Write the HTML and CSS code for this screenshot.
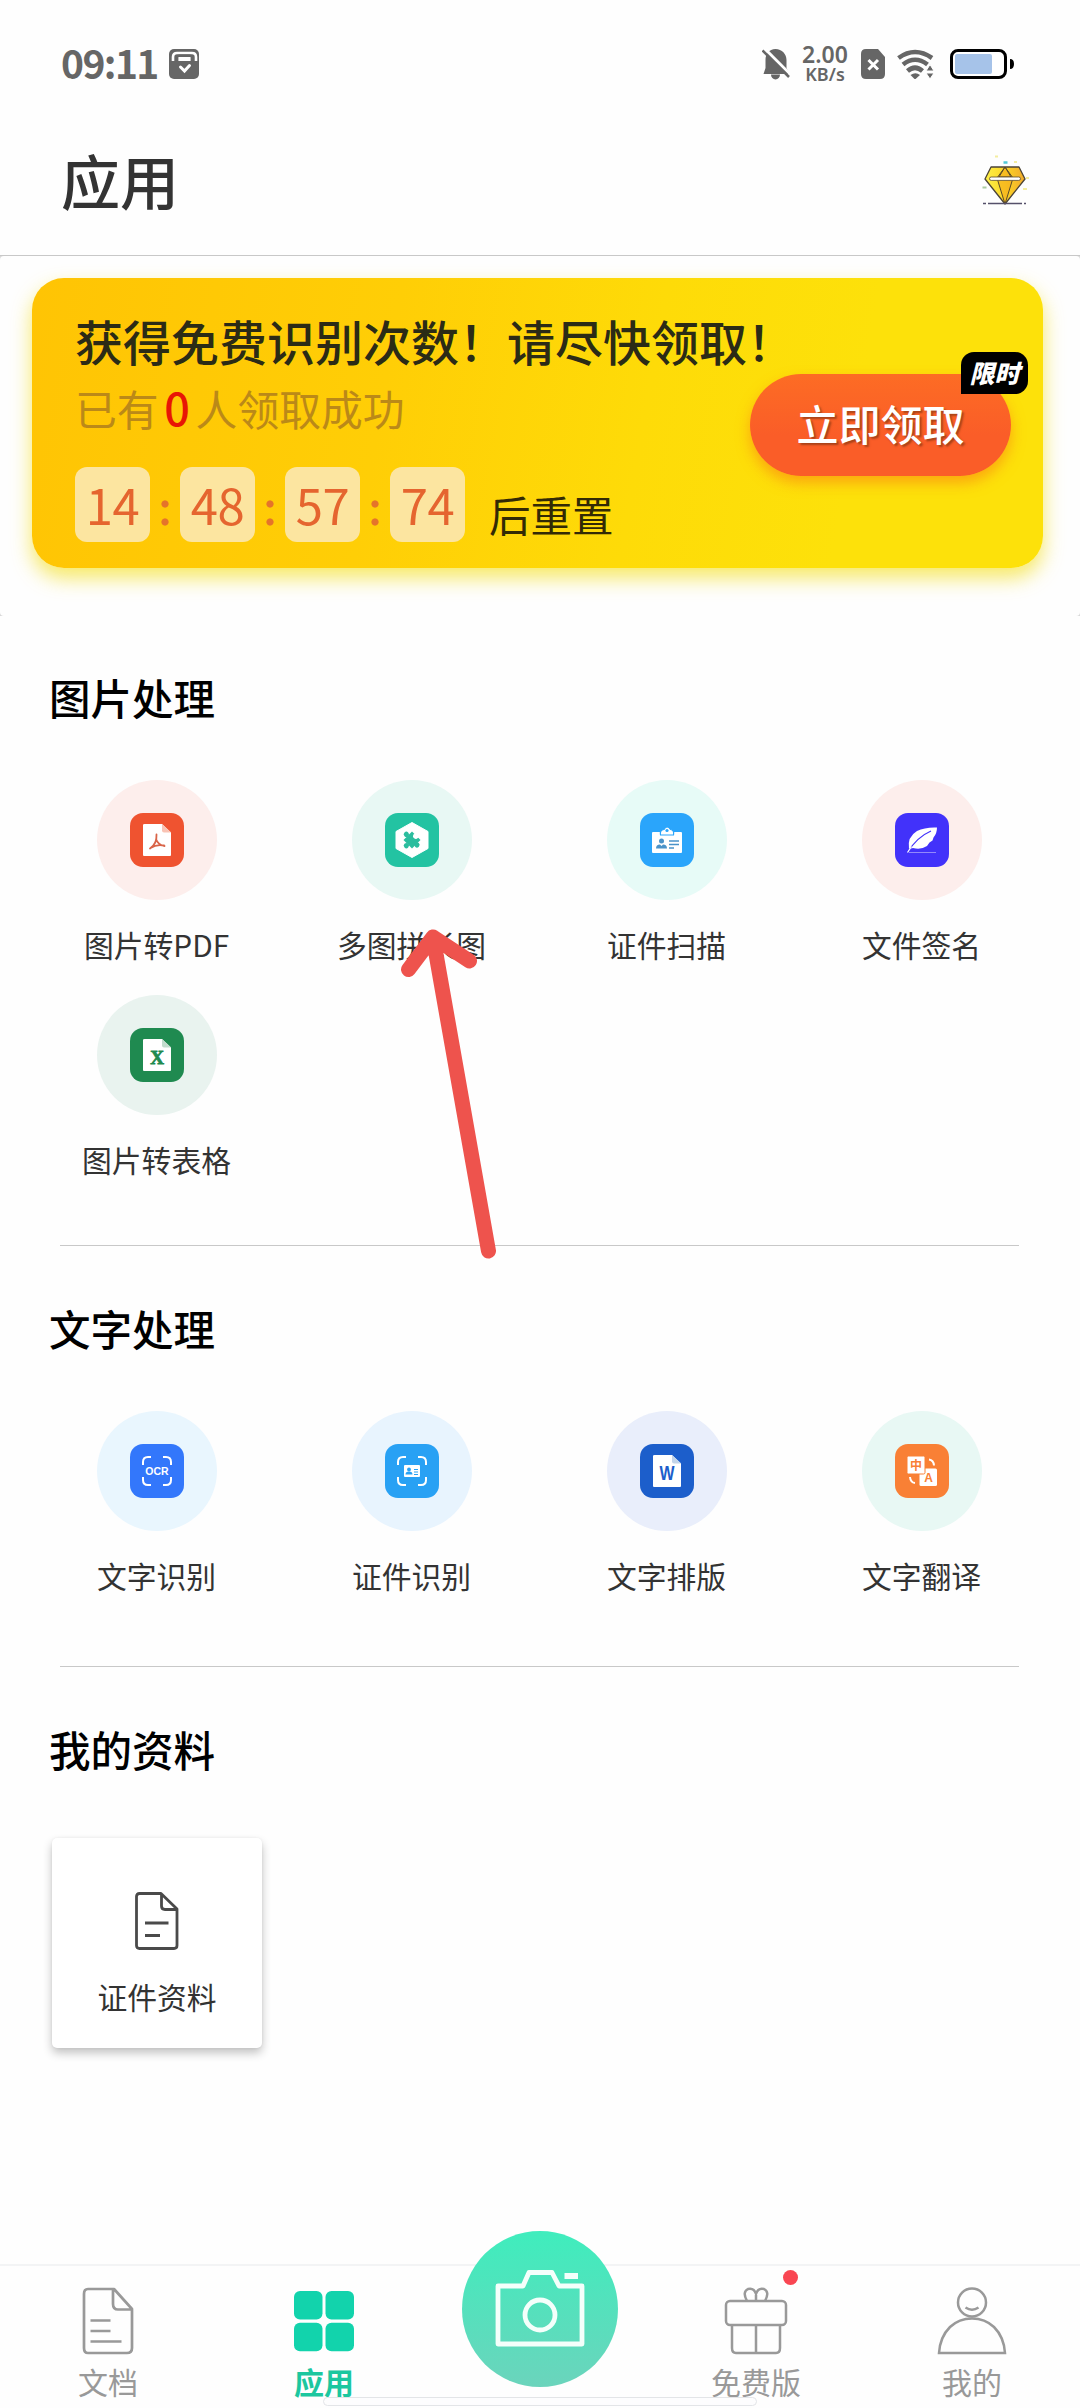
FILE: index.html
```html
<!DOCTYPE html>
<html lang="zh-CN">
<head>
<meta charset="utf-8">
<title>应用</title>
<link rel="stylesheet" href="styles.css">
</head>
<body>
<div class="screen">
  <div class="statusbar">
    <span class="clock">09:11</span>
    <svg class="st-store" width="30" height="30" viewBox="0 0 30 30"><rect width="30" height="30" rx="5" fill="#666"/><path d="M4 12V8q0-4 4-4h15q4 0 4 4v4" fill="none" stroke="#fff" stroke-width="2.6"/><path d="M8 12V9q0-1 1-1h13q1 0 1 1v3z" fill="#fff"/><path d="M8.500 12V8.500q0-2 2-2h10q2 0 2 2V12" fill="none" stroke="#666" stroke-width="1.800"/><path d="M11.500 18l4 4 5-5.500" fill="none" stroke="#fff" stroke-width="3" stroke-linecap="round"/></svg>
    <span class="grow"></span>
    <svg class="st-bell" width="28" height="31" viewBox="0 0 28 31"><path d="M13.500 0C20 0 24.500 5 24.500 11v8l3 6H1.500l2-6v-8C3.500 5 7 0 13.500 0zM9 25.500h9a4.500 5 0 0 1-9 0z" fill="#666"/><path d="M2-1L30 27" stroke="#fff" stroke-width="3"/><path d="M.5 1.500L27 28" stroke="#666" stroke-width="2.500"/></svg>
    <div class="speed">2.00<br>KB/s</div>
    <svg class="st-sim" width="24" height="30" viewBox="0 0 24 30"><path d="M5 0h12l7 8v17q0 5-5 5H5q-5 0-5-5V5q0-5 5-5z" fill="#666"/><path d="M7.500 11l9.500 9.500M17 11l-9.500 9.500" stroke="#fff" stroke-width="3"/></svg>
    <svg class="st-wifi" width="37" height="30" viewBox="0 0 37 30"><g fill="none" stroke="#666" stroke-width="4.600"><path d="M1.500 9Q18 -3 35 9"/><path d="M6 15.500q12-9.500 24.500 0"/><path d="M10.500 22q7.500-6.500 15 0"/></g><path d="M13.500 26q5-3.500 9.500 0L18 30.500z" fill="#666"/><path d="M29 22l4-6.500 4 6.500zM29 24h8l-4 6z" fill="#666" stroke="#fff" stroke-width="1"/></svg>
    <svg class="st-batt" width="65" height="30" viewBox="0 0 65 30"><rect x="1.500" y="1.500" width="54" height="27" rx="6.500" fill="#fff" stroke="#000" stroke-width="3"/><rect x="5" y="5" width="37" height="20" rx="2" fill="#a6c3e9"/><path d="M60 10q4 0 4 5t-4 5z"/></svg>
  </div>
  <header class="header">
    <h1 class="page-title">应用</h1>
    <svg class="gem" width="48" height="56" viewBox="0 0 48 56">
      <defs><linearGradient id="gem" x1="0" x2="1"><stop offset="0" stop-color="#fdf04a"/><stop offset=".5" stop-color="#fcd626"/><stop offset="1" stop-color="#f0a92c"/></linearGradient></defs>
      <path d="M10 15h28l6 12-20 25L4 27z" fill="url(#gem)" stroke="#4b4337" stroke-width="1.300" stroke-linejoin="round"/>
      <path d="M24 15l-8 11 8 26 8-26zM24 15l-6 10h12z" fill="#f5ab1c" fill-opacity=".6" stroke="#5a4a28" stroke-width="1"/>
      <rect x="8.500" y="25" width="31" height="3.400" rx="1.700" fill="#fff" stroke="#5a4a28" stroke-width=".8"/>
      <path d="M2 51.500h3M7 51.500h34M43 51.500h2" stroke="#55506a" stroke-width="1.600"/>
      <path d="M22.500 10.500h4" stroke="#52c9d8" stroke-width="2.500"/><path d="M14 4.500h3M33 10h3M45 26h3M42 37h4" stroke="#f4eda0" stroke-width="2"/><path d="M1.500 35.500h4" stroke="#a9cba0" stroke-width="2"/>
    </svg>
  </header>

  <div class="promo-wrap">
    <div class="promo-area">
      <section class="promo">
        <div class="promo-title">获得免费识别次数！请尽快领取！</div>
        <div class="promo-sub">已有<span class="promo-count">0</span>人领取成功</div>
        <div class="countdown">
          <span class="tick">14</span><span class="colon"></span><span class="tick">48</span><span class="colon"></span><span class="tick">57</span><span class="colon"></span><span class="tick">74</span>
          <span class="reset">后重置</span>
        </div>
        <div class="claim">立即领取<span class="claim-badge">限时</span></div>
      </section>
    </div>
  </div>

  <section class="group group-image">
    <h2 class="group-title">图片处理</h2>
    <div class="tools">
      <div class="tool">
        <div class="disc disc-rose"><svg class="tile" viewBox="0 0 54 54"><rect width="54" height="54" rx="13" fill="#ef5330"/><path d="M14.500 11H32l9 8.500V42q0 1-1 1H14q-1 0-1-1V12q0-1 1.500-1z" fill="#fff"/><path d="M32 11l9 8.500h-7q-2 0-2-2z" fill="#f9c3b4"/><path d="M20 35.500q7-4.500 6.500-14M26 26q2 6 8.500 7M20.500 35q6-4 13.500-2.500" fill="none" stroke="#d96448" stroke-width="1.800" stroke-linecap="round"/></svg></div>
        <span class="tool-label">图片转PDF</span>
      </div>
      <div class="tool">
        <div class="disc disc-mint"><svg class="tile" viewBox="0 0 54 54"><rect width="54" height="54" rx="13" fill="#23c3a2"/><path d="M27 9.500l16 9v17l-16 9-16-9v-17z" fill="#fff" stroke="#fff" stroke-linejoin="round"/><g transform="rotate(-45 27 27)" fill="#2bbd9e"><rect x="21" y="21" width="12" height="12"/><circle cx="27" cy="19" r="2.600"/><circle cx="19" cy="27" r="2.600"/><circle cx="27" cy="34" r="2.600"/><circle cx="32.500" cy="27" r="2.800" fill="#fff"/></g></svg></div>
        <span class="tool-label">多图拼长图</span>
      </div>
      <div class="tool">
        <div class="disc disc-aqua"><svg class="tile" viewBox="0 0 54 54"><rect width="54" height="54" rx="13" fill="#2aa5fb"/><path d="M13 19h28q1 0 1 1v19q0 1-1 1H13q-1 0-1-1V20q0-1 1-1z" fill="#fff"/><path d="M20.500 22q-1-5 3.500-5.500 3-5 6.500 0 4 .5 3 5.500z" fill="#fff" stroke="#2aa5fb" stroke-width="1.200"/><circle cx="27" cy="17.500" r="1.600" fill="#2aa5fb"/><circle cx="21.500" cy="28" r="2.500" fill="#4a93c9"/><path d="M16 35.500q0-4 4-4l1.500 1.500 1.500-1.500q4 0 4 4z" fill="#4a93c9"/><path d="M29 28h10M29 31.500h10M29 35h5" stroke="#4a93c9" stroke-width="1.500"/></svg></div>
        <span class="tool-label">证件扫描</span>
      </div>
      <div class="tool">
        <div class="disc disc-rose"><svg class="tile" viewBox="0 0 54 54"><rect width="54" height="54" rx="13" fill="#4232fa"/><path d="M14 36Q12 24 22 18q8-4 20-3.500 0 6-3.500 10l-1 3-3 2-2.500 3.500Q26 37 18 35z" fill="#fff"/><path d="M12.500 39.500Q22 24 36 18" fill="none" stroke="#4232fa" stroke-width="1.200"/><path d="M12.500 39.500l4-6" stroke="#fff" stroke-width="1.300"/><path d="M14 39.500h27" stroke="#a79ffb" stroke-width=".8"/></svg></div>
        <span class="tool-label">文件签名</span>
      </div>
      <div class="tool">
        <div class="disc disc-sage"><svg class="tile" viewBox="0 0 54 54"><rect width="54" height="54" rx="13" fill="#1f8a50"/><path d="M14.500 11H32l9 8.500V42q0 1-1 1H14q-1 0-1-1V12q0-1 1.500-1z" fill="#fff"/><path d="M32 11l9 8.500h-7q-2 0-2-2z" fill="#c2dccd"/><text x="27" y="36" class="glyph glyph-x">X</text></svg></div>
        <span class="tool-label">图片转表格</span>
      </div>
    </div>
  </section>

  <div class="divider"></div>

  <section class="group group-text">
    <h2 class="group-title">文字处理</h2>
    <div class="tools">
      <div class="tool">
        <div class="disc disc-sky"><svg class="tile" viewBox="0 0 54 54"><rect width="54" height="54" rx="13" fill="#3377fb"/><path d="M13 21v-3q0-5 5-5h3M33 13h3q5 0 5 5v3M41 33v3q0 5-5 5h-3M21 41h-3q-5 0-5-5v-3" fill="none" stroke="#fff" stroke-width="2"/><text x="27" y="31" class="glyph glyph-ocr">OCR</text></svg></div>
        <span class="tool-label">文字识别</span>
      </div>
      <div class="tool">
        <div class="disc disc-blue"><svg class="tile" viewBox="0 0 54 54"><rect width="54" height="54" rx="13" fill="#28a1f4"/><path d="M13 21v-3q0-5 5-5h3M33 13h3q5 0 5 5v3M41 33v3q0 5-5 5h-3M21 41h-3q-5 0-5-5v-3" fill="none" stroke="#fff" stroke-width="2"/><rect x="19" y="21" width="16" height="12" rx="1" fill="#fff"/><circle cx="24" cy="25.500" r="1.900" fill="#28a1f4"/><path d="M20.500 30.500q0-3 3.500-3t3.500 3zM29 25h4v1h-4zM29 27.500h4v1h-4zM29 30h4v1h-4z" fill="#28a1f4"/></svg></div>
        <span class="tool-label">证件识别</span>
      </div>
      <div class="tool">
        <div class="disc disc-lilac"><svg class="tile" viewBox="0 0 54 54"><rect width="54" height="54" rx="13" fill="#1c5ecb"/><path d="M14.500 11H32l9 8.500V42q0 1-1 1H14q-1 0-1-1V12q0-1 1.500-1z" fill="#fff"/><path d="M32 11l9 8.500h-7q-2 0-2-2z" fill="#c3d5ea"/><text x="27" y="36" class="glyph glyph-w" textLength="15" lengthAdjust="spacingAndGlyphs">W</text></svg></div>
        <span class="tool-label">文字排版</span>
      </div>
      <div class="tool">
        <div class="disc disc-mint"><svg class="tile" viewBox="0 0 54 54"><rect width="54" height="54" rx="13" fill="#f98035"/><rect x="24.500" y="24.500" width="17.500" height="17.500" rx="1.500" fill="#fff"/><rect x="12" y="12" width="18" height="18" rx="1.500" fill="#fff" stroke="#f98035" stroke-width="1"/><path d="M34 15.500q4.500.5 5 6M20 39q-4.500-.5-5-6" fill="none" stroke="#fff" stroke-width="2"/><text x="21" y="25.500" class="glyph glyph-zh">中</text><text x="33.500" y="38" class="glyph glyph-a">A</text></svg></div>
        <span class="tool-label">文字翻译</span>
      </div>
    </div>
  </section>

  <div class="divider"></div>

  <section class="group group-mine">
    <h2 class="group-title">我的资料</h2>
    <div class="doc-card">
      <svg width="44" height="58" viewBox="0 0 44 58" fill="none" stroke="#4a4a4a" stroke-width="2.800" stroke-linejoin="round"><path d="M4.500 1.500H26L42 17v36.500q0 3-3 3H4.500q-3 0-3-3v-49q0-3 3-3zM26.500 1.500V14q0 3.500 3.500 3.500h12M10 31h23.500M10 43.500h15"/></svg>
      <span class="tool-label">证件资料</span>
    </div>
  </section>

  <nav class="tabbar">
    <div class="tab">
      <svg class="tab-icon" width="52" height="68" viewBox="0 0 52 68" fill="none" stroke="#999" stroke-width="2.700" stroke-linejoin="round"><path d="M6 2h26l18 20v39q0 5-5 5H6q-4 0-4-5V7q0-5 4-5zM31 2v15q0 5.500 5 5.500h14M8.500 33.500h20M8.500 44h20M8.500 54.500h31"/></svg>
      <span>文档</span>
    </div>
    <div class="tab tab-active">
      <svg class="tab-icon" width="60" height="68" viewBox="0 0 60 68" fill="#12d3ac"><rect y="4" width="28.500" height="28.500" rx="6"/><rect x="31.500" y="4" width="28.500" height="28.500" rx="6"/><rect y="35.700" width="28.500" height="28.500" rx="6"/><rect x="31.500" y="35.700" width="28.500" height="28.500" rx="6"/></svg>
      <span>应用</span>
    </div>
    <div class="tab tab-camera">
      <div class="shutter"><svg width="90" height="78" viewBox="0 0 90 78" fill="none" stroke="#f4fffb" stroke-width="4.800" stroke-linejoin="round"><path d="M3 16h25l6-13.500h23L64 16h23v58H3z"/><circle cx="45" cy="45" r="15"/><path d="M69.500 6h13.500" stroke-width="6"/></svg></div>
    </div>
    <div class="tab">
      <svg class="tab-icon" width="64" height="68" viewBox="0 0 64 68" fill="none" stroke="#999" stroke-width="2.500"><rect x="2" y="14" width="60" height="24" rx="4"/><path d="M8 38v23q0 5 4 5h40q4 0 4-5V38M32 8v6M32 38v28M23 14q-5-9 1-12 6-1.500 8 5 2-6.500 8-5 6 3 1 12"/></svg>
      <span>免费版</span><i class="dot"></i>
    </div>
    <div class="tab">
      <svg class="tab-icon" width="70" height="68" viewBox="0 0 70 68" fill="none" stroke="#999" stroke-width="2.500"><circle cx="35" cy="15.500" r="14"/><path d="M28.500 20.500q6.500 4.500 13 0M2 66q1-16 11-26 9-8.500 22-8.500T57 40q10 10 11 26z"/></svg>
      <span>我的</span>
    </div>
  </nav>
  <div class="home-pill"></div>
  <svg class="pointer" width="110" height="340" viewBox="390 920 110 340"><path d="M488.500 1251L433 937M408.500 969.500L433 937l36.500 24" fill="none" stroke="#ee534d" stroke-width="15" stroke-linecap="round" stroke-linejoin="round"/></svg>
</div>
</body>
</html>
```
FILE: styles.css
```css
* { box-sizing: border-box; }
body {
  margin: 0;
  background: #fefefe;
  font-family: "Noto Sans CJK SC", "Noto Sans", sans-serif;
  color: #333;
}
h1, h2 { margin: 0; font-weight: 500; }
svg { display: block; flex: none; }
.screen {
  position: relative;
  width: 1080px;
  height: 2408px;
  display: flex;
  flex-direction: column;
  overflow: hidden;
}

/* Status bar */
.statusbar {
  height: 128px;
  padding: 0 65px 0 61px;
  display: flex;
  align-items: center;
  color: #666;
}
.clock {
  width: 108px;
  margin-top: -5px;
  font-size: 39px;
  font-weight: 600;
  letter-spacing: -1.6px;
}
.grow { flex: 1; }
.st-bell { margin-right: 10px; }
.speed {
  width: 50px;
  margin-right: 11px;
  font-family: "Noto Sans", sans-serif;
  font-size: 18px;
  font-weight: 600;
  line-height: 20px;
  text-align: center;
}
.speed::first-line { font-size: 23px; }
.st-sim { margin-right: 12px; }
.st-wifi { margin-right: 16px; }

/* Title bar */
.header {
  height: 128px;
  padding: 0 51px 0 61px;
  display: flex;
  align-items: center;
  justify-content: space-between;
  border-bottom: 1px solid #c8c8c8;
}
.page-title {
  height: 100px;
  font-size: 59px;
  line-height: 100px;
  margin-top: -24px;
}
.gem { margin-top: -23px; }

/* Promo banner */
.promo-wrap { height: 360px; background: #d8d8d8; }
.promo-area {
  height: 360px;
  padding: 22px 37px 0 32px;
  background: #fefefe;
  border-radius: 4px;
}
.promo {
  position: relative;
  height: 290px;
  padding: 30px 0 0 43px;
  border-radius: 32px;
  background: linear-gradient(100deg, #ffc404 0%, #ffce06 35%, #fedb08 60%, #fde10a 80%);
  box-shadow: 0 10px 20px rgba(244, 226, 50, .75);
}
.promo-title {
  font-size: 48px;
  line-height: 64px;
  font-weight: 500;
  color: #2b2b16;
  white-space: nowrap;
}
.promo-sub {
  height: 56px;
  margin-top: 8px;
  display: flex;
  font-size: 41.800px;
  line-height: 56px;
  color: #bb8918;
}
.promo-count {
  width: 37px;
  font-size: 45px;
  line-height: 54px;
  font-weight: 500;
  text-align: center;
  color: #e81505;
}
.countdown {
  margin-top: 31px;
  display: flex;
  align-items: center;
}
.tick {
  width: 75px;
  height: 75px;
  border-radius: 12px;
  background: #fce5a0;
  font-size: 49px;
  letter-spacing: -.5px;
  line-height: 73px;
  text-align: center;
  color: #e5652f;
}
.colon {
  width: 30px;
  height: 26px;
  margin-top: 17px;
  background:
    radial-gradient(circle at 15px 4px, #e5742a 3.200px, transparent 4px),
    radial-gradient(circle at 15px 22px, #e5742a 3.200px, transparent 4px);
}
.reset {
  margin: 18px 0 0 24px;
  font-size: 41.500px;
  line-height: 50px;
  color: #332a05;
}
.claim {
  position: absolute;
  right: 32px;
  top: 96px;
  width: 261px;
  height: 102px;
  border-radius: 51px;
  background: linear-gradient(#fd6c24, #fa5d28 60%);
  box-shadow: 0 7px 14px rgba(250, 120, 20, .55);
  color: #fff;
  font-size: 42px;
  font-weight: 500;
  line-height: 98px;
  text-align: center;
  text-shadow: 2px 2px 2px rgba(90, 40, 10, .5);
}
.claim-badge {
  position: absolute;
  right: -17px;
  top: -22px;
  width: 67px;
  height: 42px;
  border-radius: 13px 13px 13px 0;
  background: #000;
  font-size: 25px;
  font-weight: 900;
  font-style: italic;
  line-height: 40px;
  text-shadow: none;
}

/* Tool groups */
.group-title {
  padding-left: 49px;
  margin-top: -2px;
  margin-bottom: 2px;
  font-size: 41.500px;
  line-height: 62px;
  color: #000;
}
.group-image { height: 629px; padding-top: 52px; }
.group-text { height: 420px; padding-top: 53px; }
.group-mine { padding-top: 53px; }
.tools {
  padding: 50px 30px 0 29px;
  display: grid;
  grid-template-columns: repeat(4, 255px);
  row-gap: 30px;
}
.tool {
  height: 185px;
  display: flex;
  flex-direction: column;
  align-items: center;
}
.disc {
  width: 120px;
  height: 120px;
  margin-bottom: 25px;
  border-radius: 50%;
  display: flex;
  align-items: center;
  justify-content: center;
}
.disc-rose { background: #fdeeec; }
.disc-mint { background: #e8f8f4; }
.disc-aqua { background: #e7fbf7; }
.disc-sage { background: #e9f3ef; }
.disc-sky { background: #e9f6fe; }
.disc-blue { background: #e8f4fe; }
.disc-lilac { background: #e9eefb; }
.tile { width: 54px; height: 54px; }
.tool-label { font-size: 29.800px; line-height: 38px; color: #333; white-space: nowrap; }
.glyph { text-anchor: middle; font-weight: 700; }
.glyph-x { font: 900 19px "Liberation Serif", serif; fill: #1f8a50; stroke: #1f8a50; stroke-width: .8px; }
.glyph-w { font: 700 20px "Liberation Sans", sans-serif; fill: #1c5ecb; }
.glyph-ocr { font: 700 10.500px "Liberation Sans", sans-serif; fill: #fff; }
.glyph-zh { font-size: 12px; fill: #f98035; }
.glyph-a { font: 700 12px "Liberation Sans", sans-serif; fill: #f98035; }
.divider { height: 1px; margin: 0 61px 0 60px; background: #c8c8c8; }

/* Document card */
.doc-card {
  width: 210px;
  height: 210px;
  margin: 58px 0 0 52px;
  padding-top: 54px;
  display: flex;
  flex-direction: column;
  align-items: center;
  gap: 27px;
  background: #fff;
  border-radius: 5px;
  box-shadow: 0 5px 10px rgba(0, 0, 0, .24), 0 0 3px rgba(0, 0, 0, .06);
}

/* Bottom tabs */
.tabbar {
  height: 144px;
  margin-top: auto;
  border-top: 2px solid #f3f4f5;
  display: grid;
  grid-template-columns: repeat(5, 216px);
}
.tab {
  position: relative;
  padding-top: 21px;
  display: flex;
  flex-direction: column;
  align-items: center;
  gap: 7px;
  font-size: 30px;
  line-height: 38px;
  color: #999;
}
.tab-active { color: #1cc79f; font-weight: 700; }
.tab-camera { padding: 0; }
.shutter {
  width: 156px;
  height: 156px;
  margin-top: -35px;
  flex: none;
  padding-top: 39px;
  border-radius: 50%;
  display: flex;
  justify-content: center;
  background: linear-gradient(#3fedbd, #6bd4bc);
}
.dot {
  position: absolute;
  left: 135px;
  top: 4px;
  width: 15px;
  height: 15px;
  border-radius: 50%;
  background: #f94652;
}
.home-pill {
  position: absolute;
  left: 323px;
  top: 2397px;
  width: 434px;
  height: 9px;
  border: 1px solid #e3e5e8;
  border-radius: 5px;
  background: #fdfdfe;
}
.pointer {
  position: absolute;
  left: 390px;
  top: 920px;
}
```
